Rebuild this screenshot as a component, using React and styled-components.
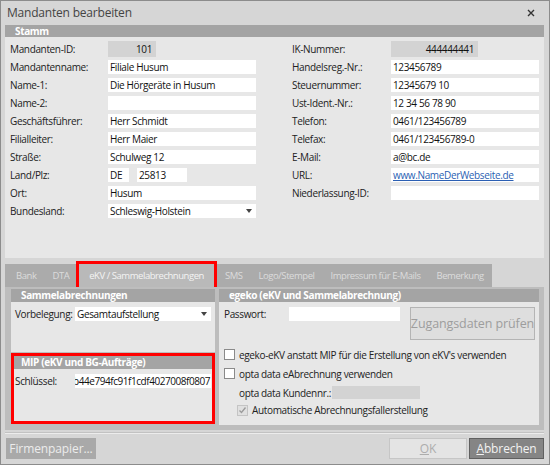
import React from "react";
import styled, { createGlobalStyle } from "styled-components";

const Global = createGlobalStyle`
  body {
    margin: 0;
    background: #d6d6d6;
    font-family: "Open Sans", "Noto Sans", sans-serif;
  }
`;

const Window = styled.div`
  width: 550px;
  height: 465px;
  box-sizing: border-box;
  border: 1px solid #8c8c8c;
  background: #d6d6d6;
  display: flex;
  flex-direction: column;
  overflow: hidden;
  letter-spacing: -0.35px;
`;

const TitleBar = styled.div`
  height: 23px;
  display: flex;
  align-items: center;
  justify-content: space-between;
  padding: 0 14px 0 6px;
  font-size: 12px;
  letter-spacing: -0.2px;
  color: #444;
`;

const Content = styled.div`
  flex: 1;
  display: flex;
  flex-direction: column;
  padding: 1px 5px 0 4px;
`;

const Header = styled.div`
  height: ${(p) => p.$h || 12}px;
  background: #a4a4a4;
  color: #fff;
  font-weight: 700;
  font-size: 10px;
  line-height: ${(p) => p.$h || 12}px;
  padding-left: ${(p) => p.$pad || 10}px;
  white-space: nowrap;
  overflow: hidden;
`;

const StammBody = styled.div`
  height: 221px;
  background: #e7e7e7;
  padding: 3px 0 0 5px;
  display: flex;
  gap: 36px;
  box-sizing: border-box;
`;

const FieldCol = styled.div`
  display: grid;
  grid-template-columns: ${(p) => p.$label}px 148px;
  grid-auto-rows: 18px;
  align-items: center;
`;

const Label = styled.div`
  font-size: 10px;
  color: #222;
  white-space: nowrap;
  flex: none;
  width: ${(p) => (p.$w ? `${p.$w}px` : "auto")};
`;

const Input = styled.div`
  height: ${(p) => (p.$ro ? 16 : 14)}px;
  width: ${(p) => (p.$w ? `${p.$w}px` : "auto")};
  flex: none;
  background: ${(p) => (p.$ro ? "#d3d3d3" : "#fff")};
  font-size: 10px;
  line-height: ${(p) => (p.$ro ? 16 : 14)}px;
  color: #111;
  padding: 0 ${(p) => (p.$ro ? 4 : 2)}px;
  text-align: ${(p) => (p.$ro ? "right" : "left")};
  box-sizing: border-box;
  white-space: nowrap;
  overflow: hidden;
`;

const Link = styled.span`
  color: #2b5fb3;
  text-decoration: underline;
`;

const Pair = styled.div`
  display: flex;
  gap: 8px;
`;

const SelectBox = styled(Input)`
  display: flex;
  align-items: center;
  justify-content: space-between;
  padding-right: 4px;
`;

const TabStrip = styled.div`
  margin-top: 6px;
  align-self: flex-start;
  height: 23px;
  background: #ababab;
  display: flex;
  align-items: stretch;
  padding: 0 0 0 3px;
  box-sizing: border-box;
`;

const Tab = styled.div`
  padding: 0 ${(p) => (p.$active ? 10 : 8)}px;
  margin: ${(p) => (p.$active ? "0 3px 0 2px" : "0")};
  display: flex;
  align-items: center;
  font-size: 9.5px;
  letter-spacing: -0.45px;
  color: ${(p) => (p.$active ? "#f4f4f4" : "#dcdcdc")};
  background: ${(p) => (p.$active ? "#b9b9b9" : "transparent")};
  outline: ${(p) => (p.$active ? "3px solid #f00" : "none")};
  white-space: nowrap;
`;

const TabPage = styled.div`
  height: 143px;
  background: #bdbdbd;
  display: flex;
  gap: 4px;
  padding: 2px 5px 0 6px;
  box-sizing: border-box;
`;

const LeftCol = styled.div`
  width: 204px;
  display: flex;
  flex-direction: column;
  gap: 1px;
`;

const Panel = styled.div`
  display: flex;
  flex-direction: column;
  width: ${(p) => (p.$w ? `${p.$w}px` : "auto")};
  height: ${(p) => p.$h}px;
  background: #e7e7e7;
  padding: ${(p) => (p.$marked ? "3px" : "0")};
  outline: ${(p) => (p.$marked ? "3px solid #f00" : "none")};
  outline-offset: -3px;
  box-sizing: border-box;
`;

const PanelBody = styled.div`
  flex: 1;
  padding: ${(p) => p.$pad || "5px 4px 0 4px"};
  display: flex;
  flex-direction: column;
`;

const Line = styled.div`
  display: flex;
  align-items: ${(p) => (p.$top ? "flex-start" : "center")};
  gap: ${(p) => p.$gap || 0}px;
  height: ${(p) => p.$h || 14}px;
  padding-left: ${(p) => p.$indent || 0}px;
  margin-top: ${(p) => p.$mt || 0}px;
`;

const KeyBox = styled(Input)`
  padding: 0 1px 0 0;
  direction: rtl;
  text-align: right;
  letter-spacing: -0.45px;
`;

const Button = styled.div`
  width: ${(p) => p.$w}px;
  height: ${(p) => p.$h}px;
  margin-left: ${(p) => p.$ml || 0}px;
  flex: none;
  box-sizing: border-box;
  display: flex;
  align-items: center;
  justify-content: center;
  font-size: ${(p) => p.$fs || 12}px;
  letter-spacing: -0.1px;
  white-space: nowrap;
  background: ${(p) => p.$bg};
  color: ${(p) => p.$fg};
  border: 1px solid ${(p) => p.$bd};
`;

const Check = styled.div`
  width: 11px;
  height: 11px;
  flex: none;
  box-sizing: border-box;
  border: 1px solid ${(p) => (p.$disabled ? "#c4c4c4" : "#8a8a8a")};
  background: ${(p) => (p.$disabled ? "#e0e0e0" : "#fff")};
  display: flex;
  align-items: center;
  justify-content: center;
`;

const CheckText = styled.span`
  font-size: 10px;
  color: #222;
  white-space: nowrap;
`;

const Footer = styled.div`
  flex: 1;
  border-top: 1px solid #c2c2c2;
  box-shadow: inset 0 1px 0 #ececec;
  margin-top: 2px;
  display: flex;
  align-items: flex-start;
  padding: 5px 0 0 1px;
`;

const Spacer = styled.div`
  flex: 1;
`;

const Arrow = () => (
  <svg width="6" height="4" viewBox="0 0 6 4">
    <path d="M0 0h6L3 4z" fill="#444" />
  </svg>
);

const left = [
  ["Mandanten-ID:", <Input $ro $w={48}>101</Input>],
  ["Mandantenname:", <Input>Filiale Husum</Input>],
  ["Name-1:", <Input>Die Hörgeräte in Husum</Input>],
  ["Name-2:", <Input />],
  ["Geschäftsführer:", <Input>Herr Schmidt</Input>],
  ["Filialleiter:", <Input>Herr Maier</Input>],
  ["Straße:", <Input>Schulweg 12</Input>],
  [
    "Land/Plz:",
    <Pair>
      <Input $w={21}>DE</Input>
      <Input $w={50}>25813</Input>
    </Pair>,
  ],
  ["Ort:", <Input>Husum</Input>],
  [
    "Bundesland:",
    <SelectBox>
      Schleswig-Holstein
      <Arrow />
    </SelectBox>,
  ],
];

const right = [
  ["IK-Nummer:", <Input $ro $w={87}>444444441</Input>],
  ["Handelsreg.-Nr.:", <Input>123456789</Input>],
  ["Steuernummer:", <Input>12345679 10</Input>],
  ["Ust-Ident.-Nr.:", <Input>12 34 56 78 90</Input>],
  ["Telefon:", <Input>0461/123456789</Input>],
  ["Telefax:", <Input>0461/123456789-0</Input>],
  ["E-Mail:", <Input>a@bc.de</Input>],
  ["URL:", <Input><Link>www.NameDerWebseite.de</Link></Input>],
  ["Niederlassung-ID:", <Input />],
];

const tabs = [
  "Bank",
  "DTA",
  "eKV / Sammelabrechnungen",
  "SMS",
  "Logo/Stempel",
  "Impressum für E-Mails",
  "Bemerkung",
];

export default function App() {
  return (
    <>
      <Global />
      <Window>
        <TitleBar>
          <span>Mandanten bearbeiten</span>
          <svg width="8" height="8" viewBox="0 0 8 8">
            <path d="M1 1l6 6M7 1L1 7" stroke="#333" strokeWidth="1.4" />
          </svg>
        </TitleBar>
        <Content>
          <Header $h={12}>Stamm</Header>
          <StammBody>
            <FieldCol $label={98}>
              {left.map(([l, f]) => (
                <React.Fragment key={l}>
                  <Label>{l}</Label>
                  {f}
                </React.Fragment>
              ))}
            </FieldCol>
            <FieldCol $label={99}>
              {right.map(([l, f]) => (
                <React.Fragment key={l}>
                  <Label>{l}</Label>
                  {f}
                </React.Fragment>
              ))}
            </FieldCol>
          </StammBody>

          <TabStrip>
            {tabs.map((t) => (
              <Tab key={t} $active={t.startsWith("eKV")}>
                {t}
              </Tab>
            ))}
          </TabStrip>

          <TabPage>
            <LeftCol>
              <Panel $h={63}>
                <Header $h={13}>Sammelabrechnungen</Header>
                <PanelBody>
                  <Line>
                    <Label $w={60}>Vorbelegung:</Label>
                    <SelectBox $w={136}>
                      Gesamtaufstellung
                      <Arrow />
                    </SelectBox>
                  </Line>
                </PanelBody>
              </Panel>
              <Panel $h={71} $marked>
                <Header $h={13} $pad={7}>MIP (eKV und BG-Aufträge)</Header>
                <PanelBody $pad="5px 1px 0 1px">
                  <Line>
                    <Label $w={60}>Schlüssel:</Label>
                    <KeyBox $w={136}>a72ceb44e794fc91f1cdf4027008f0807</KeyBox>
                  </Line>
                </PanelBody>
              </Panel>
            </LeftCol>

            <Panel $w={321} $h={136}>
              <Header $h={13}>egeko (eKV und Sammelabrechnung)</Header>
              <PanelBody $pad="5px 4px 0 5px">
                <Line $h={33} $top>
                  <Label $w={65} style={{ lineHeight: "14px" }}>Passwort:</Label>
                  <Input $w={111} />
                  <Spacer />
                  <Button $w={125} $h={33} $fs={12.5} $bg="#dedede" $fg="#9d9d9d" $bd="#b4b4b4">
                    Zugangsdaten prüfen
                  </Button>
                </Line>
                <Line $h={19} $gap={4} $mt={5}>
                  <Check />
                  <CheckText>egeko-eKV anstatt MIP für die Erstellung von eKV's verwenden</CheckText>
                </Line>
                <Line $h={19} $gap={4}>
                  <Check />
                  <CheckText>opta data eAbrechnung verwenden</CheckText>
                </Line>
                <Line $h={19} $indent={15}>
                  <Label $w={93}>opta data Kundennr.:</Label>
                  <Input $ro $w={88} style={{ height: 13 }} />
                </Line>
                <Line $h={16} $gap={4} $indent={13}>
                  <Check $disabled>
                    <svg width="9" height="9" viewBox="0 0 9 9">
                      <path d="M1.5 4.5l2 2 4-5" stroke="#9a9a9a" strokeWidth="1.3" fill="none" />
                    </svg>
                  </Check>
                  <CheckText>Automatische Abrechnungsfallerstellung</CheckText>
                </Line>
              </PanelBody>
            </Panel>
          </TabPage>

          <Footer>
            <Button $w={90} $h={21} $bg="#a9a9a9" $fg="#ececec" $bd="#a9a9a9">
              Firmenpapier...
            </Button>
            <Spacer />
            <Button $w={78} $h={21} $bg="#e4e4e4" $fg="#adadad" $bd="#c6c6c6">
              <u>O</u>K
            </Button>
            <Button $w={75} $h={21} $ml={2} $bg="#858585" $fg="#f2f2f2" $bd="#606060">
              <u>A</u>bbrechen
            </Button>
          </Footer>
        </Content>
      </Window>
    </>
  );
}
